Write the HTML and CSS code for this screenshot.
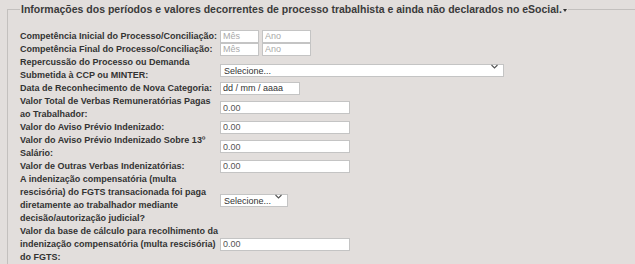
FILE: index.html
```html
<!DOCTYPE html>
<html lang="pt-BR">
<head>
    <meta charset="UTF-8">
    <title>Processo trabalhista</title>
    <link rel="stylesheet" href="styles.css">
</head>
<body>
    <fieldset class="grupo">
        <legend>Informações dos períodos e valores decorrentes de processo trabalhista e ainda não declarados no eSocial.<span class="caret"></span></legend>

        <div class="form">
            <label>Competência Inicial do Processo/Conciliação:</label>
            <div class="campo">
                <input type="text" class="mes" placeholder="Mês">
                <input type="text" class="ano" placeholder="Ano">
            </div>

            <label>Competência Final do Processo/Conciliação:</label>
            <div class="campo">
                <input type="text" class="mes" placeholder="Mês">
                <input type="text" class="ano" placeholder="Ano">
            </div>

            <label>Repercussão do Processo ou Demanda Submetida à CCP ou MINTER:</label>
            <div class="campo">
                <span class="select larga">
                    <select><option>Selecione...</option></select>
                    <svg class="seta" width="7" height="5" viewBox="0 0 7 5"><polyline points="0.5,1 3.5,4 6.5,1" fill="none" stroke="#555" stroke-width="1.1"/></svg>
                </span>
            </div>

            <label>Data de Reconhecimento de Nova Categoria:</label>
            <div class="campo">
                <input type="text" class="data" placeholder="dd / mm / aaaa">
            </div>

            <label>Valor Total de Verbas Remuneratórias Pagas ao Trabalhador:</label>
            <div class="campo"><input type="text" class="valor" value="0.00"></div>

            <label>Valor do Aviso Prévio Indenizado:</label>
            <div class="campo"><input type="text" class="valor" value="0.00"></div>

            <label>Valor do Aviso Prévio Indenizado Sobre 13º Salário:</label>
            <div class="campo"><input type="text" class="valor" value="0.00"></div>

            <label>Valor de Outras Verbas Indenizatórias:</label>
            <div class="campo"><input type="text" class="valor" value="0.00"></div>

            <label>A indenização compensatória (multa rescisória) do FGTS transacionada foi paga diretamente ao trabalhador mediante decisão/autorização judicial?</label>
            <div class="campo">
                <span class="select curta">
                    <select><option>Selecione...</option></select>
                    <svg class="seta" width="7" height="5" viewBox="0 0 7 5"><polyline points="0.5,1 3.5,4 6.5,1" fill="none" stroke="#555" stroke-width="1.1"/></svg>
                </span>
            </div>

            <label>Valor da base de cálculo para recolhimento da indenização compensatória (multa rescisória) do FGTS:</label>
            <div class="campo"><input type="text" class="valor" value="0.00"></div>
        </div>
    </fieldset>
</body>
</html>
```

FILE: styles.css
```css
html, body {
    overflow: hidden;
}
body {
    margin: 0;
    background-color: #e2dedc;
    font-family: 'Liberation Sans', Arial, sans-serif;
    color: #333;
}
.grupo {
    margin: 3px 0 0 7px;
    padding: 14.5px 0 10px 12px;
    border: 1px solid #c3c0be;
    border-right: none;
    min-width: 0;
}
.grupo legend {
    padding: 0 1px;
    font-size: 10.5px;
    line-height: 12px;
    font-weight: bold;
    color: #3a3a3a;
}
.caret {
    display: inline-block;
    vertical-align: middle;
    margin-left: 1px;
    width: 0;
    height: 0;
    border-left: 2.5px solid transparent;
    border-right: 2.5px solid transparent;
    border-top: 3px solid #333;
}
.form {
    display: grid;
    grid-template-columns: 200px auto;
}
.form label {
    font-size: 9px;
    line-height: 13px;
    font-weight: bold;
    color: #333;
}
.campo {
    display: flex;
    align-items: center;
    gap: 3px;
}
input[type="text"], select {
    box-sizing: border-box;
    height: 13px;
    margin: 0;
    padding: 0 2px;
    border: 1px solid #c4c4c4;
    border-radius: 0;
    background-color: #fff;
    font-family: 'Liberation Sans', Arial, sans-serif;
    font-size: 9px;
    color: #555;
    outline: none;
}
input::placeholder {
    color: #a9a9a9;
}
.mes {
    width: 39px;
}
.ano {
    width: 49px;
}
.data {
    width: 80px;
}
.data::placeholder {
    color: #333;
}
.valor {
    width: 130px;
}
.select {
    position: relative;
    display: inline-block;
}
.select select {
    appearance: none;
    -webkit-appearance: none;
    width: 100%;
    padding-left: 3px;
    color: #333;
}
.larga {
    width: 284px;
}
.curta {
    width: 68px;
}
.seta {
    position: absolute;
    right: 6px;
    top: 4px;
}
```
